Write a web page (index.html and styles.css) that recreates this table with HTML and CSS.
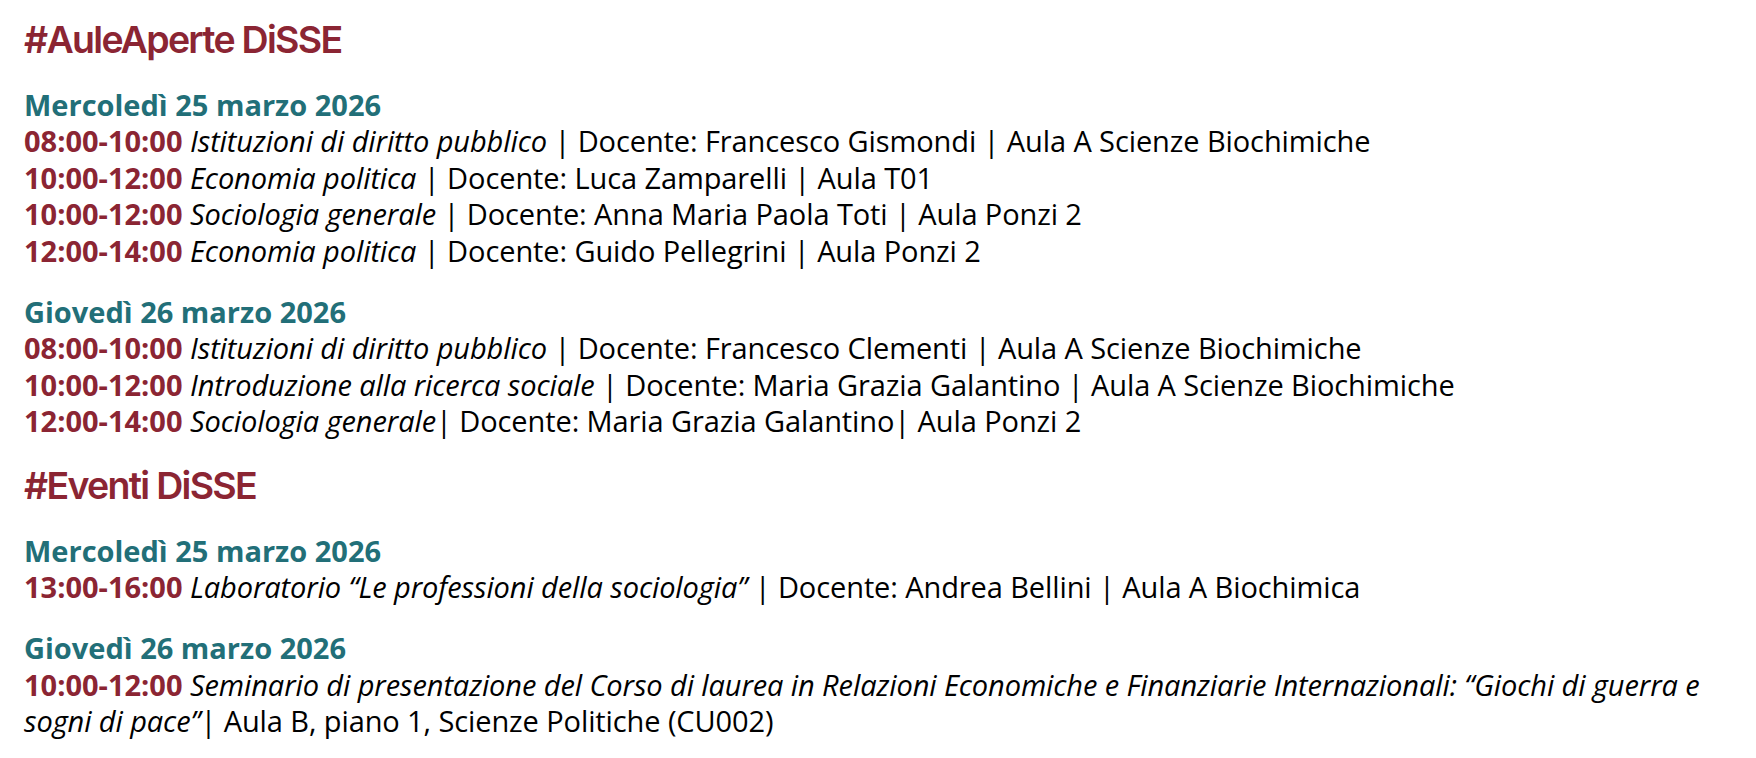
FILE: index.html
```html
<!DOCTYPE html>
<html lang="it">
<head>
<meta charset="utf-8">
<title>#AuleAperte DiSSE</title>
<link rel="stylesheet" href="styles.css">
</head>
<body>
<main class="page">
  <section class="section">
    <h2 class="section-title">#AuleAperte DiSSE</h2>
    <div class="day">
      <h3 class="day-date">Mercoledì 25 marzo 2026</h3>
      <p class="session"><strong class="time">08:00-10:00</strong> <em>Istituzioni di diritto pubblico</em> | Docente: Francesco Gismondi | Aula A Scienze Biochimiche</p>
      <p class="session"><strong class="time">10:00-12:00</strong> <em>Economia politica</em> | Docente: Luca Zamparelli | Aula T01</p>
      <p class="session"><strong class="time">10:00-12:00</strong> <em>Sociologia generale</em> | Docente: Anna Maria Paola Toti | Aula Ponzi 2</p>
      <p class="session"><strong class="time">12:00-14:00</strong> <em>Economia politica</em> | Docente: Guido Pellegrini | Aula Ponzi 2</p>
    </div>
    <div class="day">
      <h3 class="day-date">Giovedì 26 marzo 2026</h3>
      <p class="session"><strong class="time">08:00-10:00</strong> <em>Istituzioni di diritto pubblico</em> | Docente: Francesco Clementi | Aula A Scienze Biochimiche</p>
      <p class="session"><strong class="time">10:00-12:00</strong> <em>Introduzione alla ricerca sociale</em> | Docente: Maria Grazia Galantino | Aula A Scienze Biochimiche</p>
      <p class="session"><strong class="time">12:00-14:00</strong> <em>Sociologia generale</em>| Docente: Maria Grazia Galantino| Aula Ponzi 2</p>
    </div>
  </section>
  <section class="section">
    <h2 class="section-title">#Eventi DiSSE</h2>
    <div class="day">
      <h3 class="day-date">Mercoledì 25 marzo 2026</h3>
      <p class="session"><strong class="time">13:00-16:00</strong> <em>Laboratorio “Le professioni della sociologia”</em> | Docente: Andrea Bellini | Aula A Biochimica</p>
    </div>
    <div class="day">
      <h3 class="day-date">Giovedì 26 marzo 2026</h3>
      <p class="session"><strong class="time">10:00-12:00</strong> <em>Seminario di presentazione del Corso di laurea in Relazioni Economiche e Finanziarie Internazionali: “Giochi di guerra e sogni di pace”</em>| Aula B, piano 1, Scienze Politiche (CU002)</p>
    </div>
  </section>
</main>
</body>
</html>
```

FILE: styles.css
```css
* { box-sizing: border-box; }

html, body {
  margin: 0;
  padding: 0;
  background: #ffffff;
}

.page {
  padding: 18px 30px 0 24px;
  font-family: "Open Sans", "Liberation Sans", sans-serif;
  font-size: 29px;
  line-height: 36.5px;
  letter-spacing: -0.1px;
  color: #000000;
}

.section-title {
  margin: 0 0 24.5px;
  font-family: Inter, "Liberation Sans", sans-serif;
  font-weight: 600;
  font-size: 37.5px;
  line-height: 44px;
  letter-spacing: -1.7px;
  color: #8b2533;
}

.section + .section .section-title {
  margin-top: 14px;
}

.day {
  margin-bottom: 24.5px;
}

.day-date {
  margin: 0;
  font-size: 29px;
  font-weight: 700;
  letter-spacing: 0;
  color: #226f78;
}

.session {
  margin: 0;
}

.time {
  font-weight: 700;
  letter-spacing: 0;
  color: #8b2533;
}

.session em {
  font-style: italic;
}
```
